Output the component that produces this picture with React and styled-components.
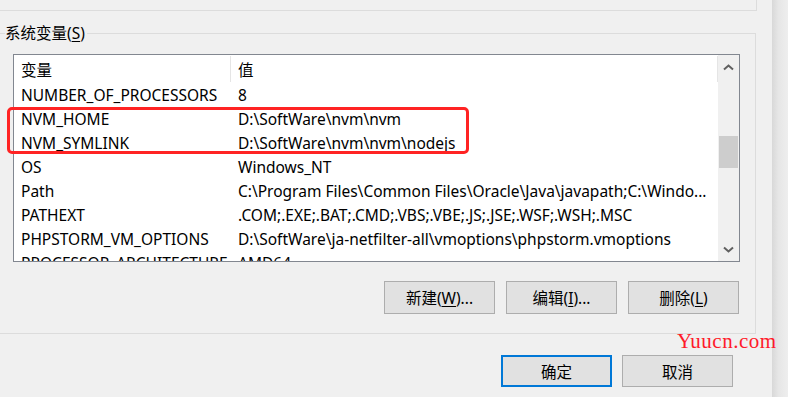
import React from "react";
import styled, { createGlobalStyle } from "styled-components";

const Global = createGlobalStyle`
    body {
        margin: 0;
        background: #f0f0f0;
        overflow: hidden;
        font-family: "Noto Sans", "Noto Sans CJK SC", sans-serif;
        color: #000;
    }
`;

const Page = styled.div`
    position: relative;
    width: 788px;
    height: 397px;
    display: flex;
    overflow: hidden;
`;

const Window = styled.div`
    position: relative;
    width: 772px;
    height: 100%;
    background: #f0f0f0;
    display: flex;
    flex-direction: column;
`;

const Shadow = styled.div`
    flex: 1;
    background: linear-gradient(to right, #d8d8d8, #e6e6e6 40%, #eeeeee);
`;

const PrevGroupEdge = styled.div`
    width: 756px;
    height: 10px;
    border-right: 1px solid #dcdcdc;
    border-bottom: 1px solid #dcdcdc;
`;

const Group = styled.fieldset`
    margin: 13px 0 0 -1px;
    width: 757px;
    box-sizing: border-box;
    border: 1px solid #dcdcdc;
    padding: 12px 15px 19px 13px;
    min-width: 0;
`;

const Legend = styled.legend`
    margin-left: -8px;
    padding: 0 2px 0 0;
    font-size: 15.5px;
    line-height: 18px;
`;

const Key = styled.span`
    text-decoration: underline;
    text-underline-offset: 2px;
`;

const List = styled.div`
    height: 208px;
    border: 1px solid #828790;
    box-sizing: border-box;
    background: #fff;
    display: flex;
`;

const Grid = styled.div`
    flex: 1;
    overflow: hidden;
`;

const Row = styled.div`
    display: grid;
    grid-template-columns: 217px 1fr;
    height: ${(p) => (p.$head ? 28 : 24)}px;
    align-items: center;
    font-size: 15.5px;
    white-space: nowrap;
`;

const Cell = styled.div`
    padding-left: 7px;
    height: ${(p) => (p.$head ? "26px" : "100%")};
    display: flex;
    align-items: center;
    overflow: hidden;
    border-right: ${(p) => (p.$head ? "1px solid #e5e5e5" : "none")};
    box-sizing: border-box;
`;

const Scrollbar = styled.div`
    width: 21px;
    background: #f0f0f0;
    display: flex;
    flex-direction: column;
    align-items: center;
`;

const Arrow = styled.div`
    height: 24px;
    width: 100%;
    display: flex;
    align-items: center;
    justify-content: center;
`;

const Track = styled.div`
    flex: 1;
    width: 100%;
    padding-top: 57px;
    box-sizing: border-box;
`;

const Thumb = styled.div`
    height: 32px;
    width: 19px;
    margin-left: 1px;
    background: #cdcdcd;
`;

const ButtonRow = styled.div`
    display: flex;
    justify-content: flex-end;
    gap: 11px;
    margin-top: 19px;
    padding-right: 1px;
`;

const Button = styled.button`
    width: 111px;
    height: ${(p) => (p.$dialog ? 32 : 33)}px;
    box-sizing: border-box;
    background: #e1e1e1;
    border: ${(p) => (p.$primary ? "2px solid #0078d7" : "1px solid #adadad")};
    border-radius: 0;
    font-family: "Noto Sans", "Noto Sans CJK SC", sans-serif;
    font-size: 15.5px;
    color: #000;
    padding: 0;
`;

const DialogRow = styled.div`
    display: flex;
    justify-content: flex-end;
    gap: 10px;
    margin-top: 21px;
    padding-right: 39px;
`;

const Highlight = styled.div`
    position: absolute;
    left: 7px;
    top: 107px;
    width: 462px;
    height: 47px;
    box-sizing: border-box;
    border: 3px solid #ff2323;
    border-radius: 5px;
    pointer-events: none;
`;

const Watermark = styled.div`
    position: absolute;
    left: 677px;
    top: 329px;
    font-family: "Liberation Serif", serif;
    font-size: 21px;
    line-height: 24px;
    color: #ff1a2a;
    letter-spacing: 0.5px;
`;

const Chevron = ({ down }) => (
    <svg width="11" height="7" viewBox="0 0 11 7">
        <path
            d={down ? "M1 1.5 L5.5 5.5 L10 1.5" : "M1 5.5 L5.5 1.5 L10 5.5"}
            fill="none"
            stroke="#606060"
            strokeWidth="2"
        />
    </svg>
);

const rows = [
    ["NUMBER_OF_PROCESSORS", "8"],
    ["NVM_HOME", "D:\\SoftWare\\nvm\\nvm"],
    ["NVM_SYMLINK", "D:\\SoftWare\\nvm\\nvm\\nodejs"],
    ["OS", "Windows_NT"],
    ["Path", "C:\\Program Files\\Common Files\\Oracle\\Java\\javapath;C:\\Windo..."],
    ["PATHEXT", ".COM;.EXE;.BAT;.CMD;.VBS;.VBE;.JS;.JSE;.WSF;.WSH;.MSC"],
    ["PHPSTORM_VM_OPTIONS", "D:\\SoftWare\\ja-netfilter-all\\vmoptions\\phpstorm.vmoptions"],
    ["PROCESSOR_ARCHITECTURE", "AMD64"],
];

const App = () => {
    return (
        <Page>
            <Global />
            <Window>
                <PrevGroupEdge />
                <Group>
                    <Legend>
                        系统变量(<Key>S</Key>)
                    </Legend>
                    <List>
                        <Grid>
                            <Row $head>
                                <Cell $head>变量</Cell>
                                <Cell $head>值</Cell>
                            </Row>
                            {rows.map(([name, value]) => (
                                <Row key={name}>
                                    <Cell>{name}</Cell>
                                    <Cell>{value}</Cell>
                                </Row>
                            ))}
                        </Grid>
                        <Scrollbar>
                            <Arrow>
                                <Chevron />
                            </Arrow>
                            <Track>
                                <Thumb />
                            </Track>
                            <Arrow>
                                <Chevron down />
                            </Arrow>
                        </Scrollbar>
                    </List>
                    <ButtonRow>
                        <Button>
                            新建(<Key>W</Key>)...
                        </Button>
                        <Button>
                            编辑(<Key>I</Key>)...
                        </Button>
                        <Button>
                            删除(<Key>L</Key>)
                        </Button>
                    </ButtonRow>
                </Group>
                <DialogRow>
                    <Button $primary $dialog>确定</Button>
                    <Button $dialog>取消</Button>
                </DialogRow>
                <Highlight />
            </Window>
            <Shadow />
            <Watermark>Yuucn.com</Watermark>
        </Page>
    );
};

export default App;
